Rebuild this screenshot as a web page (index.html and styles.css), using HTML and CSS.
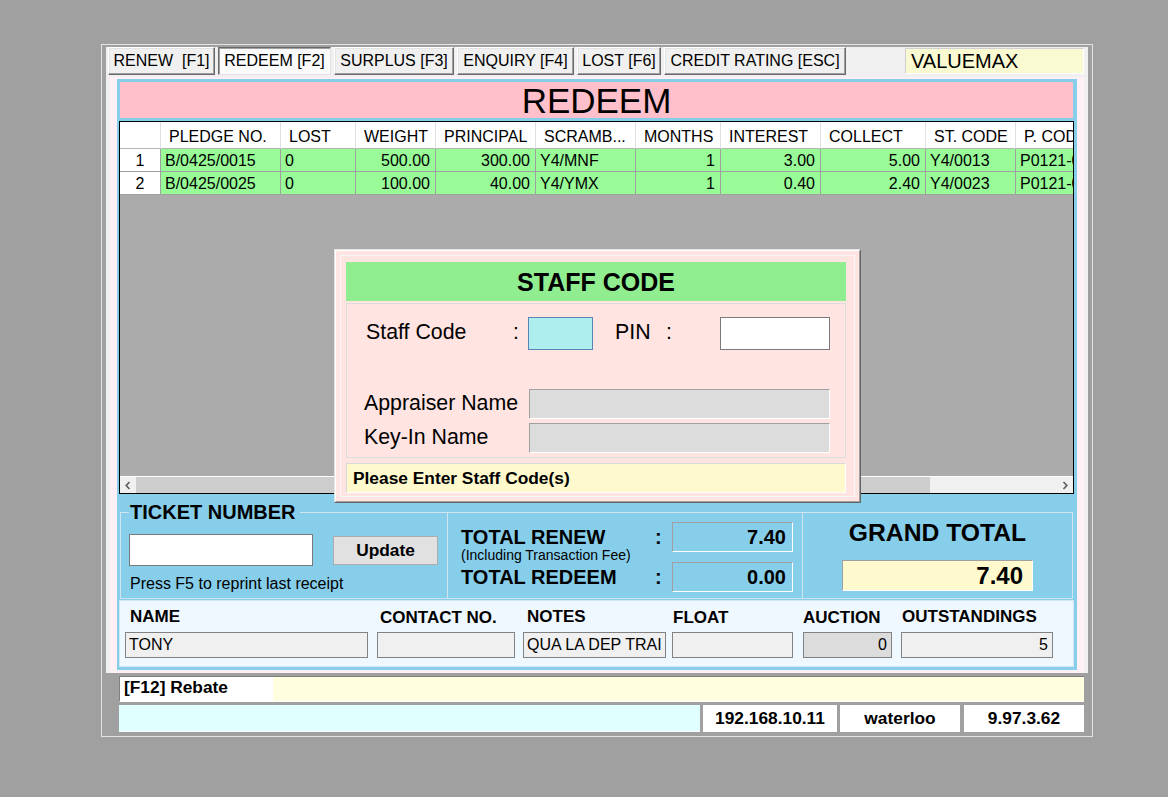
FILE: index.html
```html
<!DOCTYPE html>
<html>
<head>
<meta charset="utf-8">
<title>REDEEM</title>
<link rel="stylesheet" href="styles.css">
</head>
<body>
<div class="window">
  <div class="top-panel">
    <div class="tabs">
      <div class="tab w1">RENEW  [F1]</div>
      <div class="tab w2 active">REDEEM [F2]</div>
      <div class="tab w3">SURPLUS [F3]</div>
      <div class="tab w4">ENQUIRY [F4]</div>
      <div class="tab w5">LOST [F6]</div>
      <div class="tab w6">CREDIT RATING [ESC]</div>
      <div class="company">VALUEMAX</div>
    </div>
    <div class="main">
      <div class="box">
        <div class="title">REDEEM</div>
        <div class="grid">
          <div class="grid-body">
            <div class="row head">
              <div class="cell c0"></div>
              <div class="cell c1">PLEDGE NO.</div>
              <div class="cell c2">LOST</div>
              <div class="cell c3">WEIGHT</div>
              <div class="cell c4">PRINCIPAL</div>
              <div class="cell c5">SCRAMB...</div>
              <div class="cell c6">MONTHS</div>
              <div class="cell c7">INTEREST</div>
              <div class="cell c8">COLLECT</div>
              <div class="cell c9">ST. CODE</div>
              <div class="cell c10">P. CODE</div>
            </div>
            <div class="row data">
              <div class="cell c0 rh">1</div>
              <div class="cell c1">B/0425/0015</div>
              <div class="cell c2">0</div>
              <div class="cell c3 num">500.00</div>
              <div class="cell c4 num">300.00</div>
              <div class="cell c5">Y4/MNF</div>
              <div class="cell c6 num">1</div>
              <div class="cell c7 num">3.00</div>
              <div class="cell c8 num">5.00</div>
              <div class="cell c9">Y4/0013</div>
              <div class="cell c10">P0121-0001</div>
            </div>
            <div class="row data">
              <div class="cell c0 rh">2</div>
              <div class="cell c1">B/0425/0025</div>
              <div class="cell c2">0</div>
              <div class="cell c3 num">100.00</div>
              <div class="cell c4 num">40.00</div>
              <div class="cell c5">Y4/YMX</div>
              <div class="cell c6 num">1</div>
              <div class="cell c7 num">0.40</div>
              <div class="cell c8 num">2.40</div>
              <div class="cell c9">Y4/0023</div>
              <div class="cell c10">P0121-0002</div>
            </div>
          </div>
          <div class="hscroll">
            <div class="sb-btn"><svg width="8" height="9" viewBox="0 0 8 9"><path d="M5.5 1 L2.2 4.5 L5.5 8" fill="none" stroke="#606060" stroke-width="1.7"/></svg></div>
            <div class="sb-thumb"></div>
            <div class="sb-track"></div>
            <div class="sb-btn"><svg width="8" height="9" viewBox="0 0 8 9"><path d="M2.5 1 L5.8 4.5 L2.5 8" fill="none" stroke="#606060" stroke-width="1.7"/></svg></div>
          </div>
        </div>

        <div class="totals">
          <div class="ticket">
            <div class="group-label">TICKET NUMBER</div>
            <div class="ticket-row">
              <div class="ticket-input"></div>
              <div class="btn-update">Update</div>
            </div>
            <div class="hint">Press F5 to reprint last receipt</div>
          </div>
          <div class="sums">
            <div class="sum-label">
              <span class="sum-main">TOTAL RENEW</span>
              <span class="sum-sub">(Including Transaction Fee)</span>
            </div>
            <div class="sum-colon">:</div>
            <div class="sum-box">7.40</div>
            <div class="sum-label"><span class="sum-main2">TOTAL REDEEM</span></div>
            <div class="sum-colon">:</div>
            <div class="sum-box">0.00</div>
          </div>
          <div class="grand">
            <div class="grand-title">GRAND TOTAL</div>
            <div class="grand-box">7.40</div>
          </div>
        </div>

        <div class="info">
          <div class="f f-name"><div class="lbl">NAME</div><div class="val">TONY</div></div>
          <div class="f f-contact"><div class="lbl">CONTACT NO.</div><div class="val"></div></div>
          <div class="f f-notes"><div class="lbl">NOTES</div><div class="val">QUA LA DEP TRAI</div></div>
          <div class="f f-float"><div class="lbl">FLOAT</div><div class="val"></div></div>
          <div class="f f-auction"><div class="lbl">AUCTION</div><div class="val num">0</div></div>
          <div class="f f-out"><div class="lbl">OUTSTANDINGS</div><div class="val num">5</div></div>
        </div>
      </div>
    </div>
  </div>

  <div class="rebate">
    <div class="rebate-label">[F12] Rebate</div>
  </div>

  <div class="status">
    <div class="st-cyan"></div>
    <div class="st-box st-ip">192.168.10.11</div>
    <div class="st-box st-branch">waterloo</div>
    <div class="st-box st-ver">9.97.3.62</div>
  </div>
</div>

<div class="dialog">
  <div class="dlg-frame">
    <div class="dlg-inner">
      <div class="dlg-title">STAFF CODE</div>
      <div class="dlg-area">
        <div class="staff-row">
          <span class="sc-label">Staff Code</span>
          <span class="sc-colon">:</span>
          <div class="sc-input"></div>
          <span class="pin-label">PIN</span>
          <span class="pin-colon">:</span>
          <div class="pin-input"></div>
        </div>
        <div class="name-row first">
          <span class="nm-label">Appraiser Name</span>
          <div class="nm-input"></div>
        </div>
        <div class="name-row">
          <span class="nm-label">Key-In Name</span>
          <div class="nm-input"></div>
        </div>
      </div>
      <div class="dlg-msg">Please Enter Staff Code(s)</div>
    </div>
  </div>
</div>
</body>
</html>
```

FILE: styles.css
```css
* { box-sizing: border-box; }
html, body { margin: 0; padding: 0; }
body {
  background: #a0a0a0;
  font-family: "Liberation Sans", Arial, sans-serif;
  color: #000;
  width: 1168px;
  height: 797px;
  overflow: hidden;
  position: relative;
}

/* ---------- window ---------- */
.window {
  margin: 44px 0 0 101px;
  width: 992px;
  height: 693px;
  border: 1px solid #e3e3e3;
  padding: 2px 4px 0 4px;
  background: #a0a0a0;
}
.top-panel {
  background: #f0f0f0;
  height: 626px;
  padding: 0 4px 0 2px;
}

/* ---------- tabs ---------- */
.tabs {
  display: flex;
  gap: 3px;
  height: 28px;
  margin-bottom: 2px;
}
.tab {
  height: 28px;
  display: flex;
  align-items: center;
  justify-content: center;
  font-size: 16px;
  white-space: pre;
  background: #f0f0f0;
  border: 1px solid;
  border-color: #fff #696969 #696969 #fff;
  box-shadow: inset -1px -1px 0 #a0a0a0, inset 1px 1px 0 #e3e3e3;
}
.tab.active {
  background: #fafafa;
  border-color: #696969 #e3e3e3 #e3e3e3 #696969;
  box-shadow: inset 1px 1px 0 #a0a0a0;
}
.w1 { width: 107px; }
.w2 { width: 113px; }
.w3 { width: 120px; }
.w4 { width: 117px; }
.w5 { width: 84px; }
.w6 { width: 182px; }
.company {
  margin-left: auto;
  margin-top: 1px;
  width: 179px;
  height: 26px;
  background: #fafad2;
  border: 1px solid;
  border-color: #d0d0d0 #fff #fff #d0d0d0;
  font-size: 20px;
  line-height: 25px;
  padding-left: 5px;
}

/* ---------- main panel ---------- */
.main {
  margin-left: 2px;
  height: 596px;
  background: #fff0f5;
  padding: 2px 0 0 7px;
}
.box {
  width: 960px;
  height: 591px;
  background: #87ceeb;
  padding: 3px 0 0 2px;
}
.title {
  margin: 0 0 3px 1px;
  width: 953px;
  height: 36px;
  background: #ffc0cb;
  font-size: 35px;
  line-height: 38px;
  text-align: center;
}

/* ---------- grid ---------- */
.grid {
  width: 955px;
  height: 373px;
  border: 1px solid #000;
  background: #ababab;
  display: flex;
  flex-direction: column;
}
.grid-body {
  flex: 1;
  overflow: hidden;
}
.row {
  display: flex;
  width: 1100px;
}
.cell {
  flex: none;
  height: 23px;
  line-height: 24px;
  font-size: 16px;
  padding: 0 4px;
  white-space: nowrap;
  overflow: hidden;
  border-right: 1px solid #a0a0a0;
  border-bottom: 1px solid #a0a0a0;
  background: #98fb98;
}
.row.head .cell {
  height: 27px;
  line-height: 29px;
  background: #fff;
  padding-left: 8px;
  border-right-color: #e0e0e0;
  border-bottom-color: #b4b4b4;
}
.cell.rh {
  background: #fff;
  text-align: center;
  padding: 0;
}
.cell.num {
  text-align: right;
  padding-right: 5px;
}
.c0 { width: 41px; }
.c1 { width: 120px; }
.c2 { width: 75px; }
.c3 { width: 80px; }
.c4 { width: 100px; }
.c5 { width: 100px; }
.c6 { width: 85px; }
.c7 { width: 100px; }
.c8 { width: 105px; }
.c9 { width: 90px; }
.c10 { width: 110px; }

.hscroll {
  height: 17px;
  border-top: 1px solid #fff;
  display: flex;
  background: #f0f0f0;
}
.sb-btn {
  width: 16px;
  display: flex;
  align-items: center;
  justify-content: center;
}
.sb-thumb {
  width: 794px;
  background: #cdcdcd;
}
.sb-track { flex: 1; }

/* ---------- totals ---------- */
.totals {
  display: flex;
  width: 953px;
  height: 87px;
  margin: 18px 0 0 1px;
  border: 1px solid #cfe4ee;
}
.ticket {
  width: 327px;
  border-right: 1px solid #cfe4ee;
  padding-left: 8px;
}
.group-label {
  display: block;
  width: fit-content;
  height: 23px;
  margin-top: -12px;
  padding: 0 4px 0 1px;
  background: #87ceeb;
  font-size: 20px;
  font-weight: bold;
  line-height: 23px;
}
.ticket-row {
  display: flex;
  align-items: center;
  margin-top: 10px;
}
.ticket-input {
  width: 184px;
  height: 32px;
  background: #fff;
  border: 1px solid #7a7a7a;
}
.btn-update {
  margin-left: 20px;
  width: 105px;
  height: 29px;
  background: #e1e1e1;
  border: 1px solid #adadad;
  font-size: 17.33px;
  font-weight: bold;
  text-align: center;
  line-height: 27px;
}
.hint {
  margin-top: 9px;
  padding-left: 1px;
  font-size: 16px;
  line-height: 18px;
}

.sums {
  width: 355px;
  border-right: 1px solid #cfe4ee;
  display: grid;
  grid-template-columns: 184px 27px 121px;
  grid-template-rows: 30px 30px;
  row-gap: 10px;
  padding: 9px 0 0 13px;
  align-content: start;
}
.sum-label {
  height: 30px;
  white-space: nowrap;
}
.sum-main {
  display: block;
  font-size: 20px;
  font-weight: bold;
  line-height: 22px;
  padding-top: 4px;
}
.sum-sub {
  display: block;
  font-size: 14px;
  line-height: 14px;
}
.sum-main2 {
  display: block;
  font-size: 20px;
  font-weight: bold;
  line-height: 30px;
}
.sum-colon {
  padding-left: 10px;
  font-size: 20px;
  font-weight: bold;
  line-height: 30px;
}
.sum-box {
  height: 30px;
  border: 1px solid;
  border-color: #a0a0a0 #fff #fff #a0a0a0;
  text-align: right;
  padding-right: 6px;
  font-size: 20px;
  font-weight: bold;
  line-height: 28px;
}

.grand {
  flex: 1;
  display: flex;
  flex-direction: column;
  align-items: center;
}
.grand-title {
  margin-top: 6px;
  font-size: 24.7px;
  font-weight: bold;
  line-height: 28px;
}
.grand-box {
  margin-top: 13px;
  width: 191px;
  height: 31px;
  background: #fffacd;
  border: 1px solid;
  border-color: #a0a0a0 #fff #fff #a0a0a0;
  text-align: right;
  padding-right: 9px;
  font-size: 24px;
  font-weight: bold;
  line-height: 29px;
}

/* ---------- info ---------- */
.info {
  width: 955px;
  height: 67px;
  margin-top: 1px;
  border: 1px solid #cfe7f3;
  background: #f0f8ff;
  padding: 6px 0 0 5px;
  display: flex;
}
.f {
  display: flex;
  flex-direction: column;
  flex: none;
}
.f .lbl {
  height: 20px;
  font-size: 17px;
  font-weight: bold;
  line-height: 20px;
  white-space: nowrap;
}
.f .val {
  margin-top: 5px;
  height: 26px;
  border: 1px solid #828282;
  background: #f0f0f0;
  font-size: 16px;
  line-height: 24px;
  padding: 0 3px;
  white-space: nowrap;
  overflow: hidden;
}
.f .val.num {
  text-align: right;
  padding-right: 4px;
}
.f-name { width: 252px; }
.f-name .lbl { padding-left: 5px; }
.f-name .val { width: 243px; }
.f-contact { width: 146px; }
.f-contact .lbl { padding-left: 3px; padding-top: 1px; }
.f-contact .val { width: 138px; }
.f-notes { width: 149px; }
.f-notes .lbl { padding-left: 4px; }
.f-notes .val { width: 143px; }
.f-float { width: 131px; }
.f-float .lbl { padding-left: 1px; padding-top: 1px; }
.f-float .val { width: 121px; }
.f-auction { width: 98px; }
.f-auction .lbl { padding-top: 1px; }
.f-auction .val { width: 89px; background: #dcdcdc; }
.f-out { width: 152px; }
.f-out .lbl { padding-left: 1px; }
.f-out .val { width: 152px; }

/* ---------- bottom bars ---------- */
.rebate {
  display: flex;
  margin: 3px 0 0 13px;
  width: 965px;
  height: 26px;
  background: #ffffe0;
  border-top: 1px solid #808080;
  border-left: 1px solid #808080;
  border-bottom: 1px solid #fff;
}
.rebate-label {
  width: 153px;
  background: #fff;
  font-size: 17.33px;
  font-weight: bold;
  line-height: 20px;
  padding-left: 4px;
}
.status {
  display: flex;
  gap: 3px;
  margin: 3px 0 0 13px;
  width: 965px;
  height: 27px;
}
.st-cyan {
  width: 581px;
  background: #e0ffff;
  border-bottom: 1px solid #fff;
}
.st-box {
  background: #fff;
  font-size: 17.33px;
  font-weight: bold;
  text-align: center;
  line-height: 26px;
}
.st-ip { width: 134px; }
.st-branch { width: 120px; }
.st-ver { width: 120px; margin-left: 1px; }

/* ---------- dialog (overlay) ---------- */
.dialog {
  position: absolute;
  left: 334px;
  top: 249px;
  width: 527px;
  height: 254px;
  background: #ffe4e1;
  border: 1px solid;
  border-color: #e3e3e3 #646464 #646464 #e3e3e3;
}
.dlg-frame {
  height: 100%;
  border: 1px solid;
  border-color: #fff #a0a0a0 #a0a0a0 #fff;
  padding: 4px;
}
.dlg-inner {
  height: 100%;
  border: 1px solid #f7f7f7;
  padding: 6px 0 0 5px;
}
.dlg-title {
  width: 500px;
  height: 39px;
  background: #90ee90;
  font-size: 25px;
  font-weight: bold;
  text-align: center;
  line-height: 40px;
}
.dlg-area {
  width: 500px;
  height: 155px;
  margin-top: 2px;
  border: 1px solid #dcdcdc;
  padding-top: 13px;
}
.staff-row {
  display: flex;
  height: 33px;
  padding-left: 19px;
  font-size: 21.33px;
  line-height: 31px;
}
.sc-label { width: 147px; }
.sc-colon { width: 15px; }
.sc-input {
  width: 65px;
  height: 33px;
  background: #afeeee;
  border: 1px solid #5a84b4;
}
.pin-label { width: 51px; margin-left: 22px; }
.pin-colon { width: 54px; }
.pin-input {
  width: 110px;
  height: 33px;
  background: #fff;
  border: 1px solid #7a7a7a;
}
.name-row {
  display: flex;
  height: 30px;
  margin-top: 4px;
  padding-left: 17px;
  font-size: 21.33px;
  line-height: 28px;
}
.name-row.first { margin-top: 39px; }
.nm-label { width: 165px; white-space: nowrap; }
.nm-input {
  width: 301px;
  height: 30px;
  background: #dcdcdc;
  border: 1px solid;
  border-color: #a0a0a0 #fff #fff #a0a0a0;
}
.dlg-msg {
  width: 500px;
  height: 30px;
  margin-top: 5px;
  background: #fffacd;
  border: 1px solid;
  border-color: #d8d8d8 #fff #fff #d8d8d8;
  font-size: 17.33px;
  font-weight: bold;
  line-height: 28px;
  padding-left: 6px;
}
```
